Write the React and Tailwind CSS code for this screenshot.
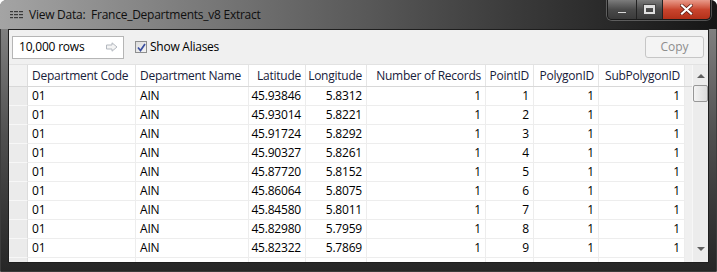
import React from "react";

// View Data window (Windows 7 style) with a data grid

const columns = [
  { label: "Department Code", w: 108, align: "left" },
  { label: "Department Name", w: 113, align: "left" },
  { label: "Latitude", w: 57, align: "right" },
  { label: "Longitude", w: 61, align: "right" },
  { label: "Number of Records", w: 119, align: "right" },
  { label: "PointID", w: 48, align: "right" },
  { label: "PolygonID", w: 65, align: "right" },
  { label: "SubPolygonID", w: 86, align: "right" },
];

const rows = [
  ["01", "AIN", "45.93846", "5.8312", "1", "1", "1", "1"],
  ["01", "AIN", "45.93014", "5.8221", "1", "2", "1", "1"],
  ["01", "AIN", "45.91724", "5.8292", "1", "3", "1", "1"],
  ["01", "AIN", "45.90327", "5.8261", "1", "4", "1", "1"],
  ["01", "AIN", "45.87720", "5.8152", "1", "5", "1", "1"],
  ["01", "AIN", "45.86064", "5.8075", "1", "6", "1", "1"],
  ["01", "AIN", "45.84580", "5.8011", "1", "7", "1", "1"],
  ["01", "AIN", "45.82980", "5.7959", "1", "8", "1", "1"],
  ["01", "AIN", "45.82322", "5.7869", "1", "9", "1", "1"],
  ["01", "AIN", "45.79793", "5.7810", "1", "10", "1", "1"],
];

function TitleIcon() {
  return (
    <svg width="13" height="8" viewBox="0 0 13 8" className="shrink-0">
      {[0, 3, 6].map((y) => (
        <g key={y} fill="#3a3a3a">
          <rect x="0" y={y} width="3" height="1.2" />
          <rect x="4" y={y} width="4" height="1.2" />
          <rect x="9" y={y} width="4" height="1.2" />
        </g>
      ))}
    </svg>
  );
}

function WindowButtons() {
  return (
    <div className="flex h-[20px] rounded-b-[5px] border border-t-0 border-[#1a1a1a] overflow-hidden shadow-[0_0_0_1px_rgba(255,255,255,0.25)]">
      <div className="w-[29px] flex items-center justify-center bg-gradient-to-b from-[#7c7c7c] via-[#4a4a4a] to-[#3a3a3a] border-r border-[#222]">
        <div className="w-[10px] h-[3px] mt-[5px] bg-[#d8d8d8] border border-[#444]" />
      </div>
      <div className="w-[26px] flex items-center justify-center bg-gradient-to-b from-[#7c7c7c] via-[#4a4a4a] to-[#3a3a3a] border-r border-[#222]">
        <div className="w-[11px] h-[9px] border-[2px] border-t-[3px] border-[#e0e0e0] outline outline-1 outline-[#444]" />
      </div>
      <div className="w-[47px] flex items-center justify-center bg-gradient-to-b from-[#e89a8a] via-[#c9452e] to-[#b33018]">
        <svg width="13" height="11" viewBox="0 0 13 11">
          <path d="M2 1.5 L11 9.5 M11 1.5 L2 9.5" stroke="#5a1a10" strokeWidth="3.6" strokeLinecap="square" />
          <path d="M2 1.5 L11 9.5 M11 1.5 L2 9.5" stroke="#ffffff" strokeWidth="2.2" strokeLinecap="square" />
        </svg>
      </div>
    </div>
  );
}

function Scrollbar() {
  return (
    <div className="w-[16px] shrink-0 flex flex-col items-center bg-[#ececec] border-l border-[#f7f7f7]">
      <div className="h-[20px] w-full flex items-center justify-center">
        <div className="w-0 h-0 border-l-[4px] border-r-[4px] border-b-[4px] border-l-transparent border-r-transparent border-b-[#606060] mt-[2px]" />
      </div>
      <div className="w-[15px] h-[17px] rounded-[2px] border border-[#979797] bg-gradient-to-r from-[#f3f3f3] to-[#dcdcdc]" />
      <div className="flex-1" />
      <div className="h-[20px] w-full flex items-center justify-center">
        <div className="w-0 h-0 border-l-[4px] border-r-[4px] border-t-[4px] border-l-transparent border-r-transparent border-t-[#606060] mb-[6px]" />
      </div>
    </div>
  );
}

export default function App() {
  return (
    <div className="w-[717px] h-[272px] bg-white overflow-hidden font-['Open_Sans',sans-serif] text-[12px]">
      <div className="w-full h-full rounded-t-[7px] border border-[#3c3c3c] bg-gradient-to-b from-[#8e8e8e] via-[#4f4f4f] to-[#262626] flex flex-col">
        {/* Title bar */}
        <div className="h-[29px] shrink-0 flex items-start bg-gradient-to-r from-[#a4a4a4] via-[#5a5a5a] to-[#161616] rounded-t-[6px] -mx-px -mt-px">
          <div className="flex items-center h-[29px] pl-[10px] gap-[6px]">
            <TitleIcon />
            <span className="text-[#0f0f0f] text-[12px] tracking-[-0.25px] whitespace-pre">View Data:  France_Departments_v8 Extract</span>
          </div>
          <div className="ml-auto mr-[6px]">
            <WindowButtons />
          </div>
        </div>

        {/* Client area */}
        <div className="flex-1 mx-[7px] mb-[8px] border border-[#1e1e1e] bg-[#f0f0f0] flex flex-col overflow-hidden">
          {/* Toolbar */}
          <div className="h-[34px] shrink-0 flex items-center px-[3px] text-[#000]">
            <div className="w-[112px] h-[23px] bg-white border border-[#b5b5b5] flex items-center pl-[6px] pr-[5px]">
              <span className="tracking-[-0.2px]">10,000 rows</span>
              <svg className="ml-auto" width="12" height="10" viewBox="0 0 12 10">
                <path d="M0.5 3 H6 V0.8 L11 5 L6 9.2 V7 H0.5 Z" fill="#f4f4f4" stroke="#b3b8bf" strokeWidth="1" />
              </svg>
            </div>
            <label className="ml-[11px] flex items-center gap-[3px]">
              <span className="w-[12px] h-[12px] border border-[#8e8f8f] bg-gradient-to-br from-[#dcdcdc] to-[#f4f4f4] flex items-center justify-center">
                <svg width="9" height="9" viewBox="0 0 9 9">
                  <path d="M1 4.5 L3.5 7.5 L8 1" fill="none" stroke="#3a4fa0" strokeWidth="1.7" />
                </svg>
              </span>
              <span className="tracking-[-0.25px]">Show Aliases</span>
            </label>
            <div className="ml-auto mr-[1px] w-[59px] h-[22px] rounded-[3px] border border-[#c6c6c6] bg-[#f4f4f4] flex items-center justify-center text-[#8d8d8d]">
              Copy
            </div>
          </div>

          {/* Grid */}
          <div className="flex-1 flex overflow-hidden border-t border-[#e2e2e2]">
            <div className="flex-1 flex flex-col overflow-hidden bg-[#f0f0f0]">
              {/* Header */}
              <div className="h-[22px] shrink-0 flex border-b border-[#d8d8d8]">
                <div className="w-[19px] shrink-0 bg-[#f2f2f2] border-r border-[#dcdcdc]" />
                {columns.map((c) => (
                  <div
                    key={c.label}
                    style={{ width: c.w }}
                    className={`shrink-0 bg-white border-r border-[#e5e5e5] flex items-center px-[4px] text-[#17203a] whitespace-nowrap tracking-[-0.25px] ${c.align === "right" ? "justify-end" : "justify-start"}`}
                  >
                    {c.label}
                  </div>
                ))}
              </div>
              {/* Rows */}
              {rows.map((r, i) => (
                <div key={i} className="h-[19px] shrink-0 flex">
                  <div className="w-[19px] shrink-0 bg-[#ebebeb] border-r border-[#dcdcdc] border-b border-b-[#f7f7f7]" />
                  {columns.map((c, j) => (
                    <div
                      key={c.label}
                      style={{ width: c.w }}
                      className={`shrink-0 bg-white border-r border-b border-[#ededed] flex items-center px-[4px] text-black whitespace-nowrap tracking-[-0.2px] ${c.align === "right" ? "justify-end" : "justify-start"}`}
                    >
                      {r[j]}
                    </div>
                  ))}
                </div>
              ))}
            </div>
            <Scrollbar />
          </div>
        </div>
      </div>
    </div>
  );
}
